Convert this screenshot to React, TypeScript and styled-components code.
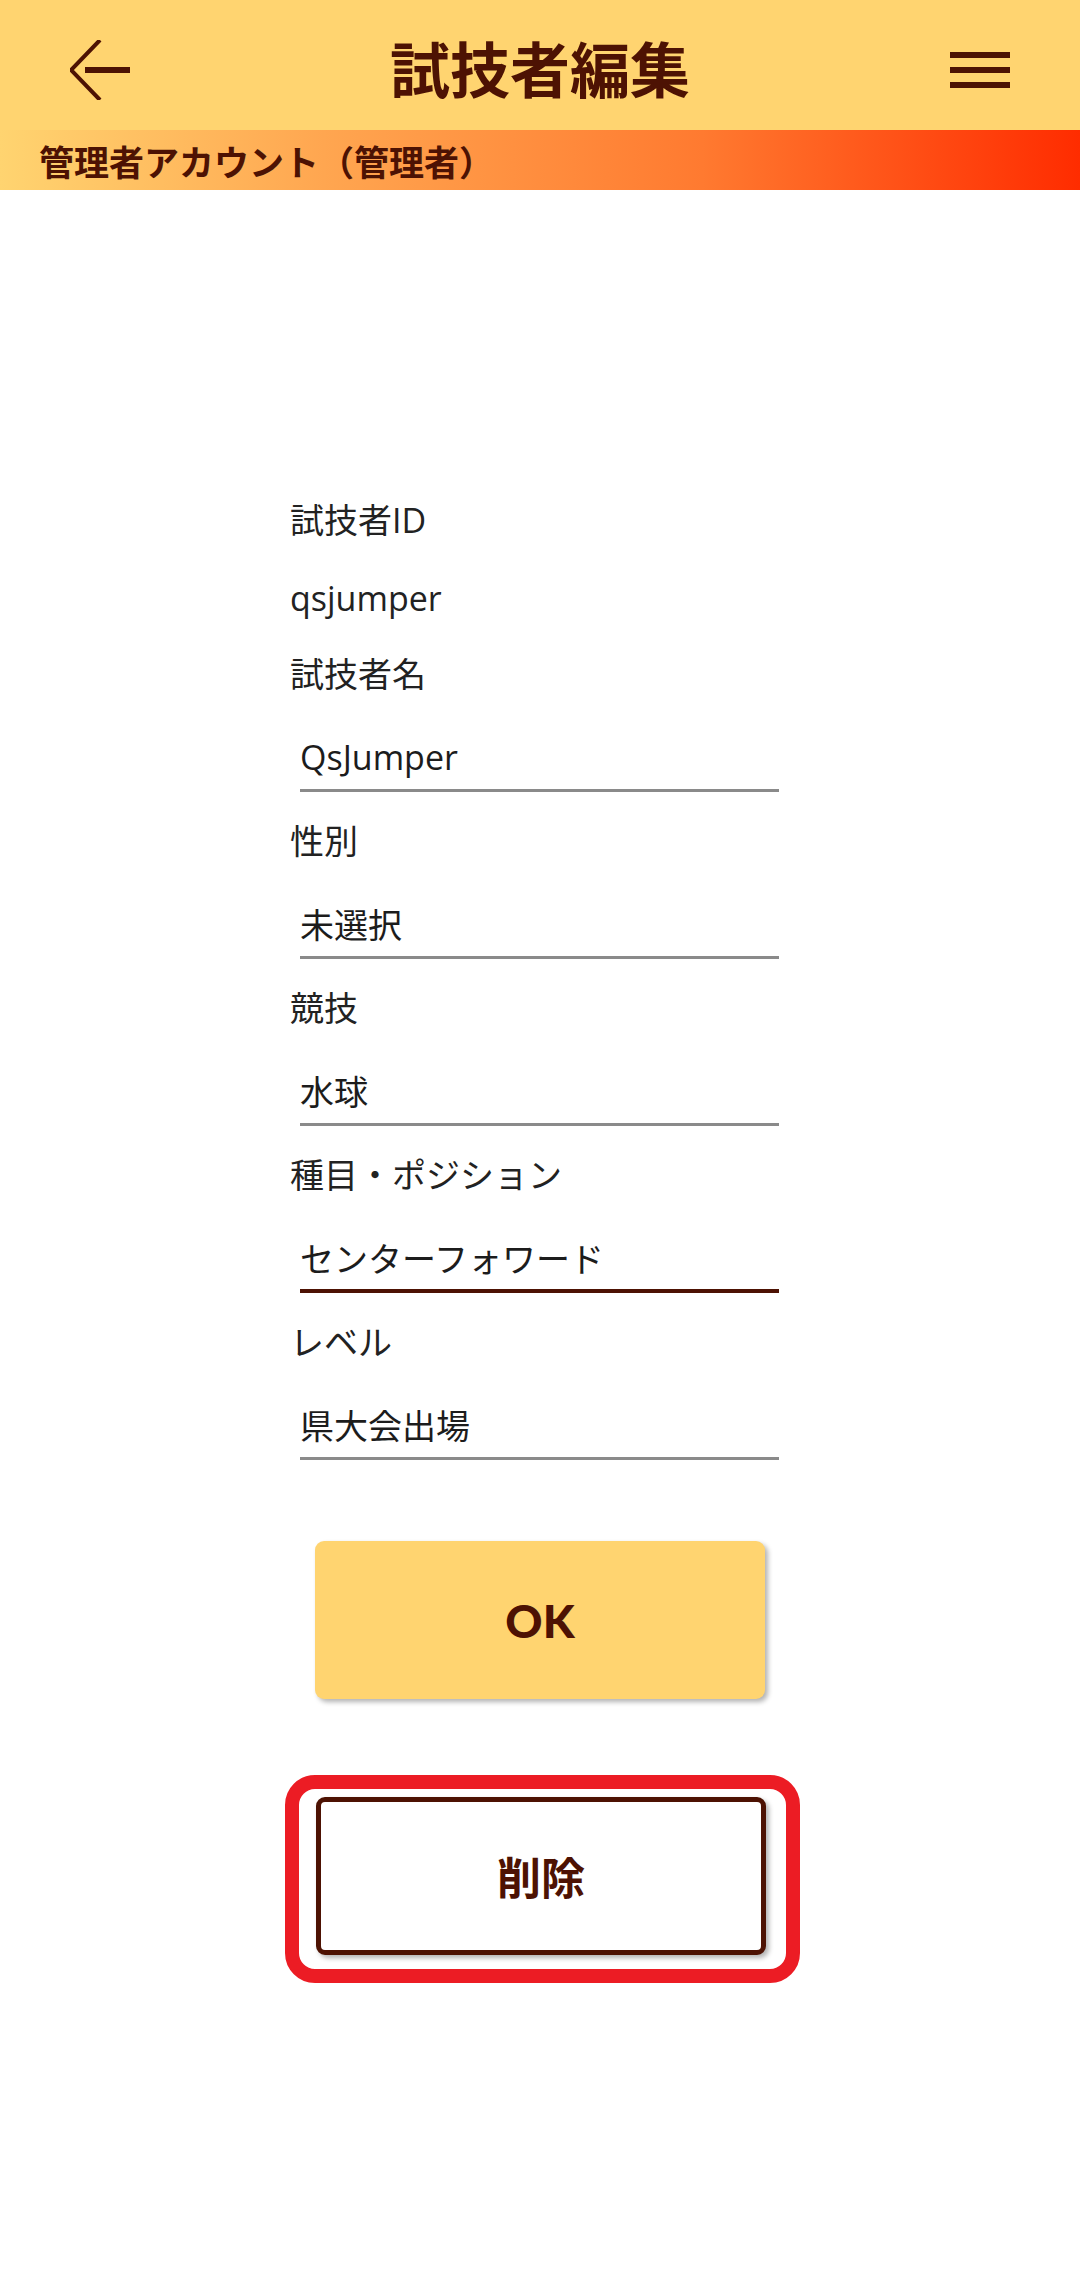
import * as React from 'react';
import styled, { createGlobalStyle } from 'styled-components';

const BROWN = '#4d1203';
const YELLOW = '#ffd470';

const GlobalStyle = createGlobalStyle`
  html, body {
    margin: 0;
    padding: 0;
    background: #ffffff;
  }
  body {
    font-family: "Open Sans", "Noto Sans CJK JP", sans-serif;
    color: #222222;
  }
  * {
    box-sizing: border-box;
  }
`

const Page = styled.div`
  width: 1080px;
  min-height: 2290px;
  background: #ffffff;
  display: flex;
  flex-direction: column;
`

const Header = styled.header`
  height: 130px;
  background: ${YELLOW};
  display: grid;
  grid-template-columns: 1fr auto 1fr;
  align-items: center;
  padding: 0 70px;
`

const IconButton = styled.button<{ align: 'start' | 'end' }>`
  justify-self: ${p => p.align};
  width: 60px;
  height: 60px;
  margin-top: 10px;
  padding: 0;
  border: none;
  background: transparent;
  display: flex;
  align-items: center;
  justify-content: center;
  cursor: pointer;
`

const Title = styled.h1`
  margin: 0;
  font-family: "Noto Sans CJK JP", sans-serif;
  font-weight: 700;
  font-size: 60px;
  line-height: 1;
  color: ${BROWN};
  padding-top: 4px;
`

const AccountBar = styled.div`
  height: 60px;
  padding-left: 39px;
  display: flex;
  align-items: center;
  background: linear-gradient(90deg, ${YELLOW} 0%, #ffa650 30%, #ff7a30 65%, #ff2c00 100%);
  font-family: "Noto Sans CJK JP", sans-serif;
  font-weight: 700;
  font-size: 35px;
  color: ${BROWN};
`

const Form = styled.form`
  width: 500px;
  margin: 0 auto;
  padding-top: 306px;
  display: flex;
  flex-direction: column;
`

const Label = styled.div`
  height: 48px;
  font-size: 34px;
  line-height: 48px;
  color: #222222;
`

const StaticValue = styled.div`
  height: 48px;
  margin: 30px 0 28px;
  font-size: 34px;
  line-height: 48px;
  color: #222222;
`

const Field = styled.div`
  display: flex;
  flex-direction: column;
  margin-bottom: 25px;
`

const TextInput = styled.input<{ $active?: boolean }>`
  width: 479px;
  height: 94px;
  margin-left: 10px;
  padding: 26px 0 0 0;
  border: none;
  border-bottom: ${p => (p.$active ? `4px solid ${BROWN}` : '3px solid #8a8a8a')};
  background: transparent;
  outline: none;
  font-family: "Open Sans", "Noto Sans CJK JP", sans-serif;
  font-size: 34px;
  color: #1c1c1c;
`

const Actions = styled.div`
  padding-top: 56px;
  display: flex;
  flex-direction: column;
  align-items: center;
  gap: 76px;
`

const OkButton = styled.button`
  width: 450px;
  height: 158px;
  border: none;
  border-radius: 9px;
  background: ${YELLOW};
  box-shadow: 3px 3px 5px rgba(0, 0, 0, 0.3);
  font-family: Lato, "Open Sans", sans-serif;
  font-weight: 900;
  font-size: 46px;
  color: ${BROWN};
  cursor: pointer;
`

const Highlight = styled.div`
  width: 515px;
  margin-left: 5px;
  border: 14px solid #ec1c24;
  border-radius: 30px;
  padding: 8px 20px 14px 17px;
  display: flex;
`

const DeleteButton = styled.button`
  width: 450px;
  height: 158px;
  border: 5px solid ${BROWN};
  border-radius: 9px;
  background: #ffffff;
  box-shadow: 3px 3px 5px rgba(0, 0, 0, 0.3);
  font-family: "Noto Sans CJK JP", sans-serif;
  font-weight: 700;
  font-size: 44px;
  color: ${BROWN};
  cursor: pointer;
`

const BackIcon = () => (
  <svg width="60" height="60" viewBox="0 0 60 60">
    <polyline points="30,0 1,30 30,60" fill="none" stroke={BROWN} strokeWidth="4" />
    <rect x="15" y="27" width="45" height="6" fill={BROWN} />
  </svg>
)

const MenuIcon = () => (
  <svg width="60" height="60" viewBox="0 0 60 60">
    <rect x="0" y="12" width="60" height="6" fill={BROWN} />
    <rect x="0" y="27" width="60" height="6" fill={BROWN} />
    <rect x="0" y="42" width="60" height="6" fill={BROWN} />
  </svg>
)

type FieldData = {
  label: string
  value: string
  active?: boolean
}

const fields: FieldData[] = [
  { label: '試技者名', value: 'QsJumper' },
  { label: '性別', value: '未選択' },
  { label: '競技', value: '水球' },
  { label: '種目・ポジション', value: 'センターフォワード', active: true },
  { label: 'レベル', value: '県大会出場' },
]

export default function App() {
  return (
    <Page>
      <GlobalStyle />
      <Header>
        <IconButton align="start" aria-label="戻る">
          <BackIcon />
        </IconButton>
        <Title>試技者編集</Title>
        <IconButton align="end" aria-label="メニュー">
          <MenuIcon />
        </IconButton>
      </Header>
      <AccountBar>管理者アカウント（管理者）</AccountBar>
      <Form onSubmit={e => e.preventDefault()}>
        <Label>試技者ID</Label>
        <StaticValue>qsjumper</StaticValue>
        {
          fields.map(({ label, value, active }) => (
            <Field key={label}>
              <Label>{label}</Label>
              <TextInput $active={active} defaultValue={value} readOnly />
            </Field>
          ))
        }
        <Actions>
          <OkButton type="submit">OK</OkButton>
          <Highlight>
            <DeleteButton type="button">削除</DeleteButton>
          </Highlight>
        </Actions>
      </Form>
    </Page>
  )
}
